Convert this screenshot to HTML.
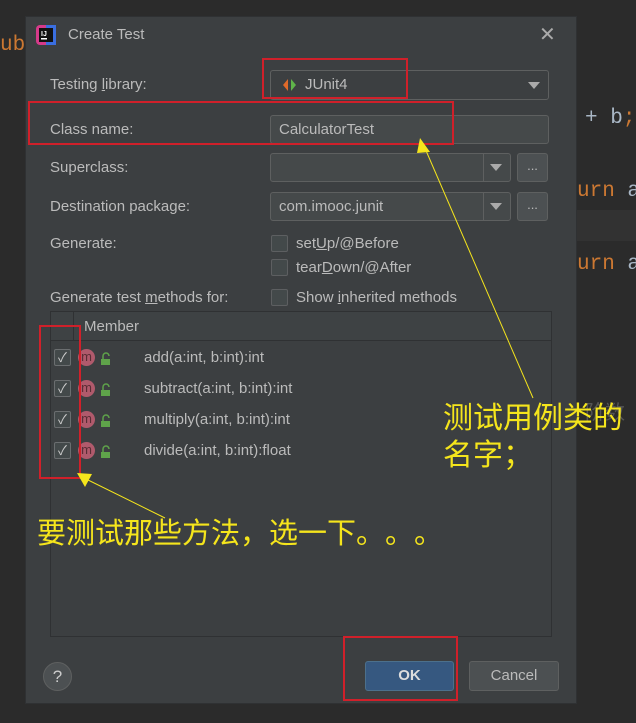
<!DOCTYPE html>
<html><head><meta charset="utf-8"><style>
*{margin:0;padding:0;box-sizing:border-box}
body{width:636px;height:723px;background:#2b2b2b;position:relative;overflow:hidden;font-family:"Liberation Sans","Noto Sans CJK SC",sans-serif;color:#bbbbbb;font-size:15px}
.a{position:absolute;white-space:nowrap}
.dlg{left:25px;top:16px;width:552px;height:688px;background:#3c3f41;border:1px solid #2f3133}
.lbl{position:absolute;left:50px;font-size:15px;color:#bbb;line-height:18px;white-space:nowrap}
.fld{position:absolute;background:#45494a;border:1px solid #5e6060;border-radius:3px}
.cb{position:absolute;width:17px;height:17px;border:1px solid #5d5f61;border-radius:2px;background:#43494a}
.red{position:absolute;border:2px solid #d0202a}
.ell{position:absolute;width:31px;height:29px;background:#4c5052;border:1px solid #5e6060;border-radius:3px;color:#bbb;text-align:center;line-height:24px;font-size:13px}
.tri{position:absolute;width:0;height:0;border-left:6px solid transparent;border-right:6px solid transparent;border-top:7px solid #aaa}
.row{position:absolute;left:0;width:500px;height:20px}
.ck{position:absolute;left:3px;width:17px;height:17px;border:1px solid #6b6e70;border-radius:2px;background:#43494a;color:#ccc;font-size:13px;line-height:15px;text-align:center}
.m{position:absolute;left:27px;width:17px;height:17px;border-radius:50%;background:#b05a6c;color:#5a2d35;font-size:13px;line-height:15px;text-align:center}
.lk{position:absolute;left:48px;top:3px}
.mt{position:absolute;left:93px;font-size:15px;color:#bbb;white-space:nowrap}
.y{position:absolute;color:#f5e51c;font-size:30px;line-height:34px;font-family:"Noto Sans CJK SC",sans-serif;white-space:nowrap}
.p{display:inline-block;width:29px;text-align:center}
.code{position:absolute;font-family:"Liberation Mono",monospace;font-size:21px;white-space:nowrap}
</style></head><body>
<div class="a" style="left:577px;top:210px;width:59px;height:31px;background:#323232"></div>
<div class="code" style="left:0;top:34px;color:#cc7832">ub</div>
<div class="code" style="left:585px;top:107px;color:#a9b7c6">+ b<span style="color:#cc7832">;</span></div>
<div class="code" style="left:577px;top:180px;color:#cc7832">urn <span style="color:#a9b7c6">a</span></div>
<div class="code" style="left:577px;top:253px;color:#cc7832">urn <span style="color:#a9b7c6">a</span></div>
<div class="a" style="left:585px;top:396px;color:#555;font-size:20px;font-family:'Noto Sans CJK SC',sans-serif">阶数</div>

<div class="a dlg"></div>
<svg class="a" style="left:36px;top:25px" width="20" height="20"><rect x="0" y="0" width="20" height="20" rx="4" fill="#d63a8a"/><rect x="10" y="0" width="10" height="20" fill="#3a6ee0"/><rect x="3" y="3" width="14" height="14" fill="#111"/><text x="5" y="11" font-size="7" fill="#fff" font-family="Liberation Sans" font-weight="bold">IJ</text><rect x="5" y="13" width="6" height="1.5" fill="#fff"/></svg>
<div class="a" style="left:68px;top:26px;font-size:15px;color:#bbb">Create Test</div>
<div class="a" style="left:539px;top:22px;font-size:20px;color:#aaa">✕</div>

<div class="lbl" style="top:76px">Testing <u>l</u>ibrary:</div>
<div class="fld" style="left:270px;top:70px;width:279px;height:30px;background:#3c3f41"></div>
<svg class="a" style="left:282px;top:78px" width="16" height="14"><path d="M6 1L1 7L6 13Z" fill="#e06a2a"/><path d="M9 1L14 7L9 13Z" fill="#5fb34a"/></svg>
<div class="a" style="left:305px;top:76px">JUnit4</div>
<div class="tri" style="left:528px;top:82px"></div>
<div class="red" style="left:262px;top:58px;width:146px;height:41px"></div>

<div class="lbl" style="top:121px">Class name:</div>
<div class="fld" style="left:270px;top:115px;width:279px;height:29px"></div>
<div class="a" style="left:279px;top:121px">CalculatorTest</div>
<div class="red" style="left:28px;top:101px;width:426px;height:44px"></div>

<div class="lbl" style="top:159px">Superclass:</div>
<div class="fld" style="left:270px;top:153px;width:241px;height:29px"></div>
<div class="a" style="left:483px;top:154px;width:1px;height:27px;background:#5e6060"></div>
<div class="tri" style="left:490px;top:164px"></div>
<div class="ell" style="left:517px;top:153px">...</div>

<div class="lbl" style="top:198px">Destination package:</div>
<div class="fld" style="left:270px;top:192px;width:241px;height:29px"></div>
<div class="a" style="left:279px;top:198px">com.imooc.junit</div>
<div class="a" style="left:483px;top:193px;width:1px;height:27px;background:#5e6060"></div>
<div class="tri" style="left:490px;top:203px"></div>
<div class="ell" style="left:517px;top:192px">...</div>

<div class="lbl" style="top:235px">Generate:</div>
<div class="cb" style="left:271px;top:235px"></div>
<div class="a" style="left:296px;top:235px">set<u>U</u>p/@Before</div>
<div class="cb" style="left:271px;top:259px"></div>
<div class="a" style="left:296px;top:259px">tear<u>D</u>own/@After</div>
<div class="lbl" style="top:289px">Generate test <u>m</u>ethods for:</div>
<div class="cb" style="left:271px;top:289px"></div>
<div class="a" style="left:296px;top:289px">Show <u>i</u>nherited methods</div>

<div class="a" style="left:50px;top:311px;width:502px;height:326px;border:1px solid #2f3133;background:#3c3f41"></div>
<div class="a" style="left:51px;top:312px;width:500px;height:29px;background:#3e4244;border-bottom:1px solid #2f3133"></div>
<div class="a" style="left:73px;top:312px;width:1px;height:29px;background:#2f3133"></div>
<div class="a" style="left:84px;top:318px">Member</div>
<div class="a" style="left:51px;top:349px;width:500px;height:130px">
 <div class="row" style="top:0"><div class="ck">✓</div><div class="m">m</div><svg class="lk" width="12" height="14"><path d="M4 7V4a3 3 0 0 1 6 0" stroke="#5fa34a" stroke-width="1.5" fill="none"/><rect x="2" y="7" width="9" height="6" fill="#5fa34a"/></svg><div class="mt">add(a:int, b:int):int</div></div>
 <div class="row" style="top:31px"><div class="ck">✓</div><div class="m">m</div><svg class="lk" width="12" height="14"><path d="M4 7V4a3 3 0 0 1 6 0" stroke="#5fa34a" stroke-width="1.5" fill="none"/><rect x="2" y="7" width="9" height="6" fill="#5fa34a"/></svg><div class="mt">subtract(a:int, b:int):int</div></div>
 <div class="row" style="top:62px"><div class="ck">✓</div><div class="m">m</div><svg class="lk" width="12" height="14"><path d="M4 7V4a3 3 0 0 1 6 0" stroke="#5fa34a" stroke-width="1.5" fill="none"/><rect x="2" y="7" width="9" height="6" fill="#5fa34a"/></svg><div class="mt">multiply(a:int, b:int):int</div></div>
 <div class="row" style="top:93px"><div class="ck">✓</div><div class="m">m</div><svg class="lk" width="12" height="14"><path d="M4 7V4a3 3 0 0 1 6 0" stroke="#5fa34a" stroke-width="1.5" fill="none"/><rect x="2" y="7" width="9" height="6" fill="#5fa34a"/></svg><div class="mt">divide(a:int, b:int):float</div></div>
</div>
<div class="red" style="left:39px;top:325px;width:42px;height:154px"></div>

<svg class="a" style="left:0;top:0" width="636" height="723"><line x1="424" y1="146" x2="533" y2="398" stroke="#f5e51c" stroke-width="1"/><path d="M420 138L430 152L417 153Z" fill="#f5e51c"/><line x1="84" y1="478" x2="165" y2="518" stroke="#f5e51c" stroke-width="1"/><path d="M77 473L92 474L85 487Z" fill="#f5e51c"/></svg>
<div class="y" style="left:443px;top:398px">测试用例类的</div>
<div class="y" style="left:443px;top:435px">名字；</div>
<div class="y" style="left:37px;top:514px;font-size:29px">要测试那些方法，选一下<span class="p">。</span><span class="p">。</span><span class="p">。</span></div>

<div class="a" style="left:43px;top:662px;width:29px;height:29px;border-radius:50%;background:#4c5052;border:1px solid #5e6060;text-align:center;line-height:27px;font-size:17px;color:#ccc">?</div>
<div class="a" style="left:365px;top:661px;width:89px;height:30px;background:#365880;border:1px solid #4c708c;border-radius:3px;text-align:center;line-height:28px;font-weight:bold;color:#ddd">OK</div>
<div class="a" style="left:469px;top:661px;width:90px;height:30px;background:#4c5052;border:1px solid #5e6060;border-radius:3px;text-align:center;line-height:28px;color:#bbb">Cancel</div>
<div class="red" style="left:343px;top:636px;width:115px;height:65px"></div>
</body></html>
